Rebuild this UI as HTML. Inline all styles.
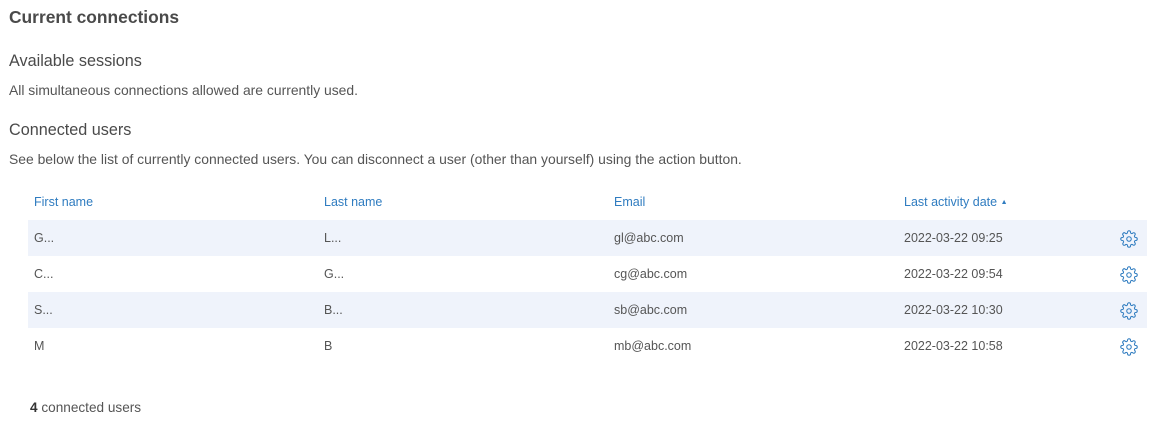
<!DOCTYPE html>
<html><head><style>
body{margin:0;background:#fff;font-family:"Liberation Sans",sans-serif;color:#555;width:1170px;height:441px;overflow:hidden;position:relative}
.a{position:absolute;white-space:nowrap}
h1{position:absolute;left:9px;top:7px;margin:0;font-size:17.4px;font-weight:bold;color:#4a4a4a}
.h{font-size:16.2px;color:#4a4a4a}
.p{font-size:13.9px;color:#555}
.row{position:absolute;left:28px;width:1119px;height:36px}
.row.s{background:#eff3fb}
.c{position:absolute;top:11px;font-size:12.5px;color:#555}
.hd{font-size:12.5px;color:#2f7cc0}
svg{position:absolute;left:1092px;top:10px}
</style></head><body>
<h1>Current connections</h1>
<div class="a h" style="left:9px;top:52px">Available sessions</div>
<div class="a p" style="left:9px;top:82px">All simultaneous connections allowed are currently used.</div>
<div class="a h" style="left:9px;top:121px">Connected users</div>
<div class="a p" style="left:9px;top:151px">See below the list of currently connected users. You can disconnect a user (other than yourself) using the action button.</div>
<div class="a hd" style="left:34px;top:195px">First name</div>
<div class="a hd" style="left:324px;top:195px">Last name</div>
<div class="a hd" style="left:614px;top:195px">Email</div>
<div class="a hd" style="left:904px;top:195px">Last activity date <span style="font-size:7px;position:relative;top:-2px">▲</span></div>

<div class="row s" style="top:220px"><div class="c" style="left:6px">G...</div><div class="c" style="left:296px">L...</div><div class="c" style="left:586px">gl@abc.com</div><div class="c" style="left:876px">2022-03-22 09:25</div><svg width="18" height="18" viewBox="0 0 24 24" fill="none" stroke="#2f7cc0" stroke-width="1.4"><circle cx="12" cy="12" r="3"/><path d="M19.4 15a1.65 1.65 0 0 0 .33 1.82l.06.06a2 2 0 1 1-2.83 2.83l-.06-.06a1.65 1.65 0 0 0-1.82-.33 1.65 1.65 0 0 0-1 1.51V21a2 2 0 1 1-4 0v-.09A1.65 1.65 0 0 0 9 19.4a1.65 1.65 0 0 0-1.820.33l-.06.06a2 2 0 1 1-2.83-2.83l.06-.06A1.65 1.65 0 0 0 4.68 15a1.65 1.65 0 0 0-1.51-1H3a2 2 0 1 1 0-4h.09A1.65 1.65 0 0 0 4.6 9a1.65 1.65 0 0 0-.33-1.82l-.06-.06a2 2 0 1 1 2.83-2.83l.06.06A1.65 1.65 0 0 0 9 4.68a1.65 1.65 0 0 0 1-1.51V3a2 2 0 1 1 4 0v.09a1.65 1.65 0 0 0 1 1.51 1.65 1.65 0 0 0 1.82-.33l.06-.06a2 2 0 1 1 2.83 2.83l-.06.06A1.65 1.65 0 0 0 19.4 9a1.65 1.65 0 0 0 1.51 1H21a2 2 0 1 1 0 4h-.09a1.65 1.65 0 0 0-1.51 1z"/></svg></div>

<div class="row" style="top:256px"><div class="c" style="left:6px">C...</div><div class="c" style="left:296px">G...</div><div class="c" style="left:586px">cg@abc.com</div><div class="c" style="left:876px">2022-03-22 09:54</div><svg width="18" height="18" viewBox="0 0 24 24" fill="none" stroke="#2f7cc0" stroke-width="1.4"><circle cx="12" cy="12" r="3"/><path d="M19.4 15a1.65 1.65 0 0 0 .33 1.82l.06.06a2 2 0 1 1-2.83 2.83l-.06-.06a1.65 1.65 0 0 0-1.82-.33 1.65 1.65 0 0 0-1 1.51V21a2 2 0 1 1-4 0v-.09A1.65 1.65 0 0 0 9 19.4a1.65 1.65 0 0 0-1.820.33l-.06.06a2 2 0 1 1-2.83-2.83l.06-.06A1.65 1.65 0 0 0 4.68 15a1.65 1.65 0 0 0-1.51-1H3a2 2 0 1 1 0-4h.09A1.65 1.65 0 0 0 4.6 9a1.65 1.65 0 0 0-.33-1.82l-.06-.06a2 2 0 1 1 2.83-2.83l.06.06A1.65 1.65 0 0 0 9 4.68a1.65 1.65 0 0 0 1-1.51V3a2 2 0 1 1 4 0v.09a1.65 1.65 0 0 0 1 1.51 1.65 1.65 0 0 0 1.82-.33l.06-.06a2 2 0 1 1 2.83 2.83l-.06.06A1.65 1.65 0 0 0 19.4 9a1.65 1.65 0 0 0 1.51 1H21a2 2 0 1 1 0 4h-.09a1.65 1.65 0 0 0-1.51 1z"/></svg></div>

<div class="row s" style="top:292px"><div class="c" style="left:6px">S...</div><div class="c" style="left:296px">B...</div><div class="c" style="left:586px">sb@abc.com</div><div class="c" style="left:876px">2022-03-22 10:30</div><svg width="18" height="18" viewBox="0 0 24 24" fill="none" stroke="#2f7cc0" stroke-width="1.4"><circle cx="12" cy="12" r="3"/><path d="M19.4 15a1.65 1.65 0 0 0 .33 1.82l.06.06a2 2 0 1 1-2.83 2.83l-.06-.06a1.65 1.65 0 0 0-1.82-.33 1.65 1.65 0 0 0-1 1.51V21a2 2 0 1 1-4 0v-.09A1.65 1.65 0 0 0 9 19.4a1.65 1.65 0 0 0-1.820.33l-.06.06a2 2 0 1 1-2.83-2.83l.06-.06A1.65 1.65 0 0 0 4.68 15a1.65 1.65 0 0 0-1.51-1H3a2 2 0 1 1 0-4h.09A1.65 1.65 0 0 0 4.6 9a1.65 1.65 0 0 0-.33-1.82l-.06-.06a2 2 0 1 1 2.83-2.83l.06.06A1.65 1.65 0 0 0 9 4.68a1.65 1.65 0 0 0 1-1.51V3a2 2 0 1 1 4 0v.09a1.65 1.65 0 0 0 1 1.51 1.65 1.65 0 0 0 1.82-.33l.06-.06a2 2 0 1 1 2.83 2.83l-.06.06A1.65 1.65 0 0 0 19.4 9a1.65 1.65 0 0 0 1.51 1H21a2 2 0 1 1 0 4h-.09a1.65 1.65 0 0 0-1.51 1z"/></svg></div>

<div class="row" style="top:328px"><div class="c" style="left:6px">M</div><div class="c" style="left:296px">B</div><div class="c" style="left:586px">mb@abc.com</div><div class="c" style="left:876px">2022-03-22 10:58</div><svg width="18" height="18" viewBox="0 0 24 24" fill="none" stroke="#2f7cc0" stroke-width="1.4"><circle cx="12" cy="12" r="3"/><path d="M19.4 15a1.65 1.65 0 0 0 .33 1.82l.06.06a2 2 0 1 1-2.83 2.83l-.06-.06a1.65 1.65 0 0 0-1.82-.33 1.65 1.65 0 0 0-1 1.51V21a2 2 0 1 1-4 0v-.09A1.65 1.65 0 0 0 9 19.4a1.65 1.65 0 0 0-1.820.33l-.06.06a2 2 0 1 1-2.83-2.83l.06-.06A1.65 1.65 0 0 0 4.68 15a1.65 1.65 0 0 0-1.51-1H3a2 2 0 1 1 0-4h.09A1.65 1.65 0 0 0 4.6 9a1.65 1.65 0 0 0-.33-1.82l-.06-.06a2 2 0 1 1 2.83-2.83l.06.06A1.65 1.65 0 0 0 9 4.68a1.65 1.65 0 0 0 1-1.51V3a2 2 0 1 1 4 0v.09a1.65 1.65 0 0 0 1 1.51 1.65 1.65 0 0 0 1.82-.33l.06-.06a2 2 0 1 1 2.83 2.83l-.06.06A1.65 1.65 0 0 0 19.4 9a1.65 1.650 0 0 0 1.51 1H21a2 2 0 1 1 0 4h-.09a1.65 1.65 0 0 0-1.51 1z"/></svg></div>

<div class="a" style="left:30px;top:400px;font-size:13.6px;color:#555"><b style="color:#333">4</b> connected users</div>
</body></html>
